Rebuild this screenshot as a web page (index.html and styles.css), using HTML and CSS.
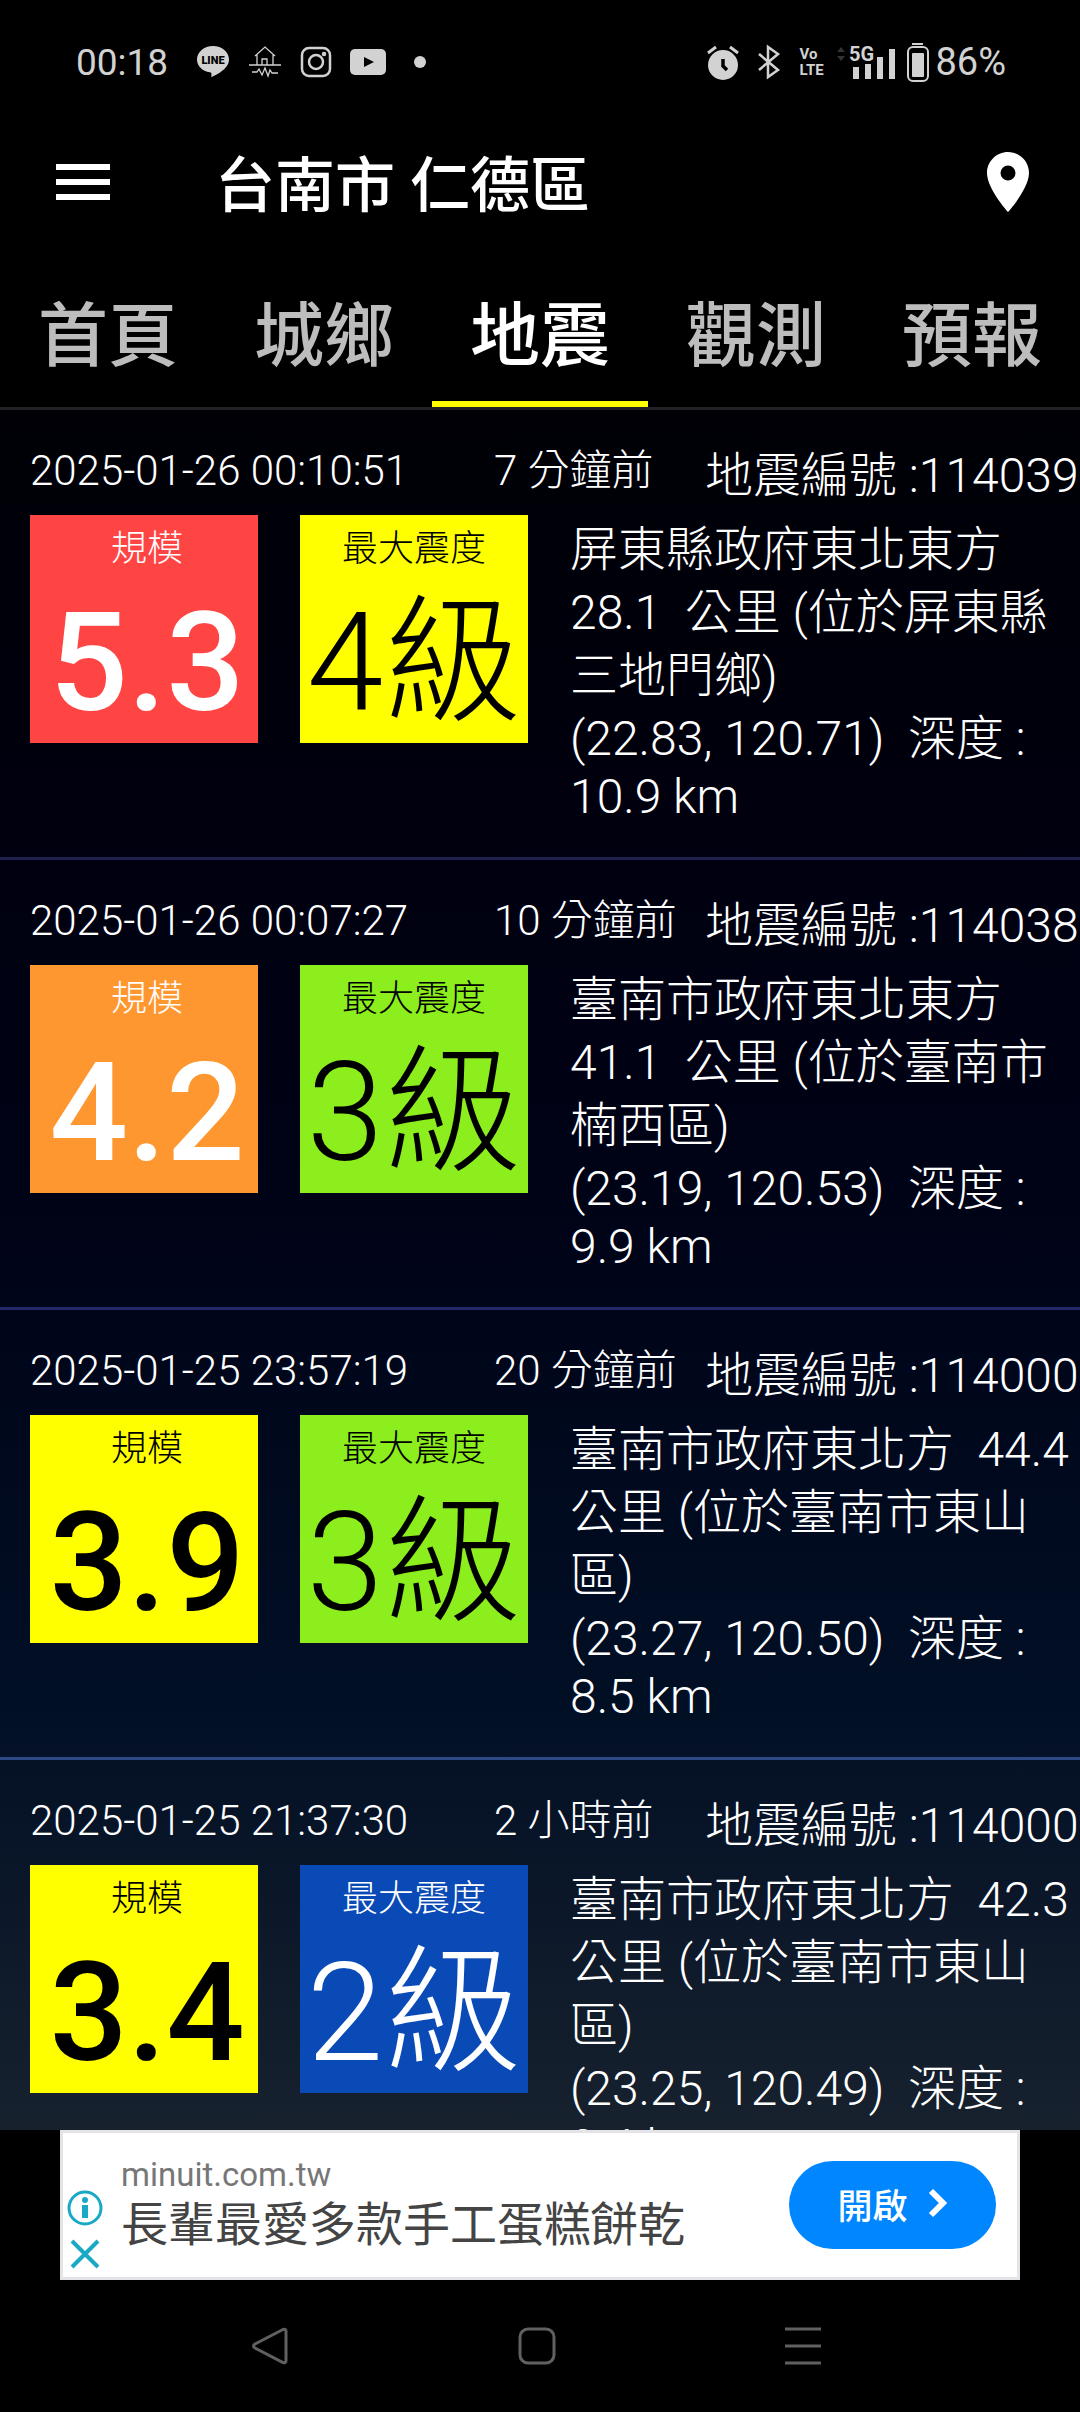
FILE: index.html
```html
<!DOCTYPE html>
<html lang="zh-Hant">
<head>
<meta charset="UTF-8">
<meta name="viewport" content="width=device-width, initial-scale=1">
<title>地震</title>
<link rel="stylesheet" href="styles.css">
</head>
<body>
<div class="app">
	<!-- status bar -->
	<div class="status">
		<span class="clock">00:18</span>
		<svg width="34" height="34" viewBox="0 0 34 34"><path d="M17 1C8 1 1 7 1 14.500c0 6.500 5 11.500 13 12.800 1.600.4 1.800 1.500 1.200 5C20 30 33 24 33 14.500 33 7 26 1 17 1z" fill="#d2d2d2"/><text x="17" y="19" text-anchor="middle" class="svg-line">LINE</text></svg>
		<svg width="34" height="34" viewBox="0 0 34 34" fill="none" stroke="#d2d2d2" stroke-width="1.300"><path d="M7 11l10-9 10 9M9 10v10M25 10v10M14 20v-6h5v6M1 20h32M4 27h5l2-3 3 6 3-7 3 8 2-6 2 3h6"/></svg>
		<svg width="32" height="32" viewBox="0 0 32 32" fill="none" stroke="#d2d2d2" stroke-width="2.500"><rect x="2" y="2" width="28" height="28" rx="7"/><circle cx="16" cy="16" r="7"/><circle cx="24" cy="8" r="1" /></svg>
		<svg width="36" height="26" viewBox="0 0 36 26"><rect width="36" height="26" rx="5" fill="#d2d2d2"/><path d="M14 8l10 5-10 5z" fill="#000"/></svg>
		<i class="dot"></i>
		<span class="grow"></span>
		<svg width="32" height="36" viewBox="0 0 32 36"><circle cx="16" cy="21" r="15" fill="#d2d2d2"/><path d="M1 9l8-6M31 9l-8-6" stroke="#d2d2d2" stroke-width="3"/><path d="M16 15v7l4 4" stroke="#000" stroke-width="3.500" fill="none"/></svg>
		<svg width="24" height="34" viewBox="0 0 24 34" fill="none" stroke="#d2d2d2" stroke-width="2.500"><path d="M2 9l19 16-10 7V2l10 7L2 25"/></svg>
		<span class="volte"><span>Vo</span><span>LTE</span></span>
		<svg class="st-signal" width="60" height="36" viewBox="0 0 60 36"><path d="M1 8l4-5 4 5zM1 12l4 5 4-5z" fill="#333"/><text x="13" y="17" class="svg-5g">5G</text><path d="M17 23h6v12h-6zM29 20h6v15h-6zM41 13h6v22h-6zM53 5h6v30h-6z" fill="#d2d2d2"/></svg>
		<svg class="st-battery" width="22" height="40" viewBox="0 0 22 40"><path d="M5 1h11v2H5z" fill="#d2d2d2"/><rect x="1" y="5" width="20" height="34" rx="5" fill="none" stroke="#d2d2d2" stroke-width="2"/><rect x="5" y="11" width="12" height="24" rx="1" fill="#d2d2d2"/></svg>
		<span class="percent">86%</span>
	</div>

	<header class="bar">
		<button class="icon-btn" aria-label="選單"><svg width="72" height="72" viewBox="0 0 24 24" fill="#fff"><path d="M3 18h18v-2H3v2zm0-5h18v-2H3v2zm0-7v2h18V6H3z"/></svg></button>
		<h1>台南市 仁德區</h1>
		<button class="icon-btn" aria-label="位置"><svg width="72" height="72" viewBox="0 0 24 24" fill="#fff"><path d="M12 2C8.130 2 5 5.130 5 9c0 5.250 7 13 7 13s7-7.750 7-13c0-3.870-3.130-7-7-7zm0 9.500a2.500 2.500 0 0 1 0-5 2.500 2.500 0 0 1 0 5z"/></svg></button>
	</header>

	<nav class="tabs">
		<a href="#home">首頁</a>
		<a href="#city">城鄉</a>
		<a href="#quake" class="on">地震</a>
		<a href="#obs">觀測</a>
		<a href="#forecast">預報</a>
	</nav>

	<main class="list">
		<article class="quake">
			<div class="head"><span class="date">2025-01-26 00:10:51</span><span class="ago">7 分鐘前</span><span class="no">地震編號 :114039</span></div>
			<div class="info">
				<div class="box mag red"><span class="label">規模</span><b>5.3</b></div>
				<div class="box yellow"><span class="label">最大震度</span><span class="level">4級</span></div>
				<p class="where">屏東縣政府東北東方<br>28.1&nbsp; 公里 (位於屏東縣<br>三地門鄉)<br>(22.83, 120.71)&nbsp; 深度 :<span class="km">10.9 km</span></p>
			</div>
		</article>
		<article class="quake">
			<div class="head"><span class="date">2025-01-26 00:07:27</span><span class="ago">10 分鐘前</span><span class="no">地震編號 :114038</span></div>
			<div class="info">
				<div class="box mag orange"><span class="label">規模</span><b>4.2</b></div>
				<div class="box green"><span class="label">最大震度</span><span class="level">3級</span></div>
				<p class="where">臺南市政府東北東方<br>41.1&nbsp; 公里 (位於臺南市<br>楠西區)<br>(23.19, 120.53)&nbsp; 深度 :<span class="km">9.9 km</span></p>
			</div>
		</article>
		<article class="quake">
			<div class="head"><span class="date">2025-01-25 23:57:19</span><span class="ago">20 分鐘前</span><span class="no">地震編號 :114000</span></div>
			<div class="info">
				<div class="box mag yellow"><span class="label">規模</span><b>3.9</b></div>
				<div class="box green"><span class="label">最大震度</span><span class="level">3級</span></div>
				<p class="where">臺南市政府東北方&nbsp; 44.4<br>公里 (位於臺南市東山<br>區)<br>(23.27, 120.50)&nbsp; 深度 :<span class="km">8.5 km</span></p>
			</div>
		</article>
		<article class="quake">
			<div class="head"><span class="date">2025-01-25 21:37:30</span><span class="ago">2 小時前</span><span class="no">地震編號 :114000</span></div>
			<div class="info">
				<div class="box mag yellow"><span class="label">規模</span><b>3.4</b></div>
				<div class="box blue"><span class="label">最大震度</span><span class="level">2級</span></div>
				<p class="where">臺南市政府東北方&nbsp; 42.3<br>公里 (位於臺南市東山<br>區)<br>(23.25, 120.49)&nbsp; 深度 :<span class="km">9.4 km</span></p>
			</div>
		</article>
	</main>

	<!-- ad banner -->
	<aside class="ad">
		<div class="ad-marks">
			<svg width="38" height="38" viewBox="0 0 38 38"><circle cx="19" cy="19" r="16" fill="none" stroke="#19a9c4" stroke-width="3"/><circle cx="19" cy="11" r="3" fill="#19a9c4"/><path d="M16 16h6v13h-6z" fill="#19a9c4"/></svg>
			<svg width="38" height="38" viewBox="0 0 38 38"><path d="M6 6l26 26M32 6L6 32" stroke="#19a9c4" stroke-width="4"/></svg>
		</div>
		<div class="ad-text">
			<span class="site">minuit.com.tw</span>
			<span class="slogan">長輩最愛多款手工蛋糕餅乾</span>
		</div>
		<button class="open">開啟<svg width="20" height="30" viewBox="0 0 20 30" fill="none" stroke="#fff" stroke-width="6"><path d="M3 3l12 12L3 27"/></svg></button>
	</aside>

	<div class="sysnav">
		<svg width="40" height="40" viewBox="0 0 40 40"><path d="M33 3.500L5 18q-3 2 0 4l28 14.500q3 1 3-2V5.500q0-3-3-2z"/></svg>
		<svg width="40" height="40" viewBox="0 0 40 40"><rect x="3" y="3" width="34" height="34" rx="8"/></svg>
		<svg width="40" height="40" viewBox="0 0 40 40"><path d="M2 3h36M2 20h36M2 37h36"/></svg>
	</div>
</div>
</body>
</html>
```
FILE: styles.css
```css
*{box-sizing:border-box}
body{margin:0;background:#000;color:#fff;font-family:Roboto,"Noto Sans CJK TC",sans-serif}
button{border:0;padding:0;background:none;color:inherit;font-family:inherit}
svg{display:block;flex:none;overflow:visible}
.app{display:flex;flex-direction:column;height:100vh;overflow:hidden}

.status{display:flex;align-items:center;height:124px;padding:0 74px 0 76px;color:#d2d2d2;font-size:37px;flex:none}
.clock{margin-right:28px}
.status svg{margin-right:18px}
.dot{width:12px;height:12px;border-radius:50%;background:#d2d2d2;margin-left:10px}
.grow{flex:1}
.svg-line{font:900 11px Roboto,sans-serif;fill:#000}
.svg-5g{font:700 20px Roboto,sans-serif;fill:#d2d2d2}
.volte{display:flex;flex-direction:column;width:37px;font-size:15px;line-height:16px;font-weight:700}
.status .st-signal{margin-right:11px}
.status .st-battery{margin-right:6px}
.percent{font-size:38px}

.bar{display:flex;align-items:center;height:116px;padding:0 36px 0 47px;flex:none}
.bar h1{margin:0;flex:1;padding:10px 0 0 96px;font-size:60px;line-height:72px;font-weight:500}

.tabs{display:flex;flex:none;height:170px;border-bottom:3px solid #222226}
.tabs a{flex:1;border-bottom:6px solid transparent;color:#bdbdbd;text-decoration:none;text-align:center;font-size:70px;line-height:194px;font-weight:500}
.tabs .on{color:#fff;border-color:#ff0}

.list{flex:1;min-height:0;overflow:hidden;background:linear-gradient(#000006,#00000f 25%,#000418 50%,#010f25 75%,#17212e)}
.quake{height:450px;padding:36px 0 0 30px;border-bottom:3px solid #20204c;font-weight:300;overflow:hidden}
.quake:nth-child(2){border-color:#22286a}
.quake:nth-child(3){border-color:#2c4a86}
.head{display:flex;align-items:flex-start;height:69px;line-height:50px;font-size:42px;white-space:nowrap}
.date{width:464px}
.ago{width:211px}
.no{font-size:48px;line-height:60px}
.info{display:flex}
.box{display:flex;flex-direction:column;align-items:center;width:228px;height:228px;margin-right:42px;flex:none;color:#000}
.mag{padding-left:6px}
.label{font-size:36px;line-height:68px}
.box b,.level{font-size:138px;line-height:160px;white-space:nowrap}
.box b{font-weight:500}
.red{background:#f44;color:#fff}
.orange{background:#ff9730;color:#fff}
.yellow{background:#ff0}
.green{background:#8cee1c}
.blue{background:#0a4ab6;color:#fff}
.where{margin:3px 0 0;font-size:48px;line-height:63px;white-space:nowrap}
.km{display:block;line-height:53px}

.ad{display:flex;align-items:center;flex:none;height:150px;margin:0 60px;padding:0 21px 0 3px;background:#fff;border:3px solid #e3e3e8}
.ad-marks{display:flex;flex-direction:column;gap:8px;width:55px;margin-top:52px}
.ad-text{display:flex;flex-direction:column;flex:1}
.site{font-size:33px;line-height:40px;color:#777}
.slogan{font-size:47px;line-height:60px;color:#444;white-space:nowrap}
.open{display:flex;align-items:center;justify-content:center;gap:20px;width:207px;height:88px;padding-bottom:4px;border-radius:44px;background:#0087ff;color:#fff;font-size:35px;font-weight:500}

.sysnav{display:flex;align-items:center;justify-content:space-between;flex:none;height:132px;padding:0 257px 0 250px}
.sysnav svg{fill:none;stroke:#606060;stroke-width:3}
```
